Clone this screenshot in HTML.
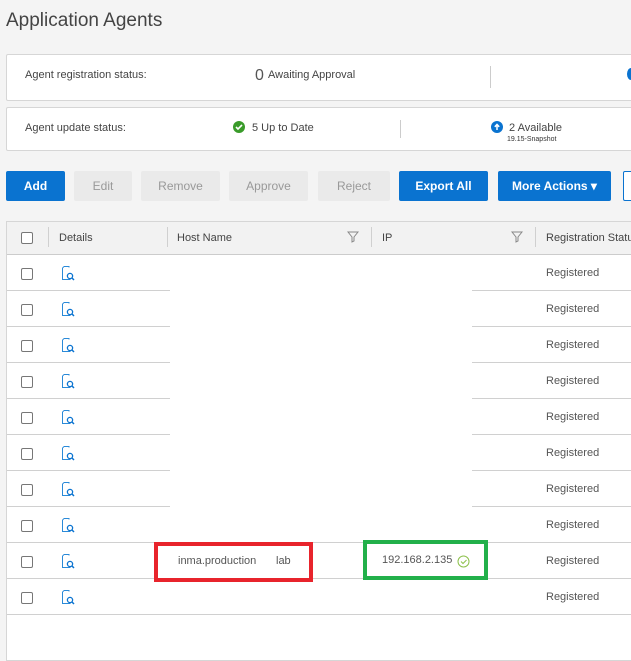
<!DOCTYPE html>
<html><head><meta charset="utf-8"><style>
*{margin:0;padding:0;box-sizing:border-box}
body{width:631px;height:647px;overflow:hidden;background:#f4f4f4;font-family:"Liberation Sans",sans-serif;color:#444;position:relative}
.a{position:absolute;white-space:nowrap}
.card{position:absolute;left:6px;width:640px;background:#fff;border:1px solid #d6d6d6;border-radius:2px}
.btn{position:absolute;top:171px;height:30px;font-size:12px;line-height:30px;text-align:center;border-radius:2px}
.p{background:#0a73d0;color:#fff;font-weight:bold}
.d{background:#eaeaea;color:#999}
.hl{position:absolute;height:1px;background:#d0d0d0}
.cb{position:absolute;left:21px;width:12px;height:12px;border:1px solid #777;border-radius:2px;background:#fff}
.reg{position:absolute;left:546px;font-size:11px;color:#555}
.vd{position:absolute;top:227px;width:1px;height:20px;background:#d0d0d0}
</style></head><body>
<div class="a" style="left:6px;top:10px;font-size:19px;color:#444">Application Agents</div>

<div class="card" style="top:54px;height:47px"></div>
<div class="a" style="left:25px;top:69px;font-size:11px">Agent registration status:</div>
<div class="a" style="left:255px;top:67px;font-size:16px;color:#555">0</div>
<div class="a" style="left:268px;top:69px;font-size:11px">Awaiting Approval</div>
<div style="position:absolute;left:490px;top:66px;width:1px;height:22px;background:#ccc"></div>
<div style="position:absolute;left:627px;top:68px;width:8px;height:12px;border-radius:50%;background:#0a73d0"></div>

<div class="card" style="top:107px;height:44px"></div>
<div class="a" style="left:25px;top:122px;font-size:11px">Agent update status:</div>
<div style="position:absolute;left:233px;top:121px;width:12px;height:12px;border-radius:50%;background:#3a9b2a"></div>
<svg class="a" style="left:235px;top:123px" width="8" height="8"><path d="M1 4l2 2 4-4" stroke="#fff" stroke-width="1.6" fill="none"/></svg>
<div class="a" style="left:252px;top:122px;font-size:11px">5 Up to Date</div>
<div style="position:absolute;left:400px;top:120px;width:1px;height:18px;background:#ccc"></div>
<div style="position:absolute;left:491px;top:121px;width:12px;height:12px;border-radius:50%;background:#0a73d0"></div>
<svg class="a" style="left:491px;top:121px" width="12" height="12"><path d="M6 9V3.5M3.8 5.8L6 3.5l2.2 2.3" stroke="#fff" stroke-width="1.5" fill="none"/></svg>
<div class="a" style="left:509px;top:122px;font-size:11px">2 Available</div>
<div class="a" style="left:507px;top:136px;font-size:7px;color:#333">19.15-Snapshot</div>

<div class="btn p" style="left:6px;width:59px">Add</div>
<div class="btn d" style="left:74px;width:58px">Edit</div>
<div class="btn d" style="left:141px;width:79px">Remove</div>
<div class="btn d" style="left:229px;width:79px">Approve</div>
<div class="btn d" style="left:318px;width:72px">Reject</div>
<div class="btn p" style="left:399px;width:89px">Export All</div>
<div class="btn p" style="left:498px;width:113px">More Actions ▾</div>
<div class="btn" style="left:623px;width:20px;border:1px solid #0a73d0;background:#fff"></div>

<div style="position:absolute;left:6px;top:221px;width:640px;height:440px;background:#fff;border:1px solid #d6d6d6"></div>
<div style="position:absolute;left:7px;top:222px;width:640px;height:33px;background:#f2f2f2;border-bottom:1px solid #ccc"></div>
<div class="cb" style="top:232px"></div>
<div class="vd" style="left:48px"></div><div class="vd" style="left:167px"></div><div class="vd" style="left:371px"></div><div class="vd" style="left:535px"></div>
<div class="a" style="left:59px;top:232px;font-size:11px">Details</div>
<div class="a" style="left:177px;top:232px;font-size:11px">Host Name</div>
<div class="a" style="left:382px;top:232px;font-size:11px">IP</div>
<div class="a" style="left:546px;top:232px;font-size:11px">Registration Status</div>
<svg class="a" style="left:347px;top:231px" width="12" height="12"><path d="M1 1h10L7 6v4l-2 1V6z" stroke="#888" fill="none"/></svg>
<svg class="a" style="left:511px;top:231px" width="12" height="12"><path d="M1 1h10L7 6v4l-2 1V6z" stroke="#888" fill="none"/></svg>

<div id="rows"></div>
<script>
var h='';
for(var i=0;i<10;i++){var y=255+i*36;
h+='<div class="cb" style="top:'+(y+13)+'px"></div>';
h+='<svg class="a" style="left:60px;top:'+(y+10)+'px" width="16" height="16"><path d="M4 1.5h5v1M2.5 3v11.5h8" stroke="#2a8ad8" fill="none"/><path d="M2.5 3l1.5-1.5" stroke="#2a8ad8"/><circle cx="10" cy="11" r="2.6" stroke="#0a73d0" stroke-width="1.3" fill="none"/><path d="M12 13l2 2" stroke="#0a73d0" stroke-width="1.5"/></svg>';
h+='<div class="reg" style="top:'+(y+12)+'px">Registered</div>';
var ly=y+35;
if(i<7){h+='<div class="hl" style="left:7px;width:163px;top:'+ly+'px"></div><div class="hl" style="left:472px;width:170px;top:'+ly+'px"></div>';}
else h+='<div class="hl" style="left:7px;width:640px;top:'+ly+'px"></div>';}
document.getElementById('rows').innerHTML=h;
</script>
<div class="a" style="left:178px;top:555px;font-size:11px;color:#555">inma.production</div>
<div class="a" style="left:276px;top:555px;font-size:11px;color:#555">lab</div>
<div style="position:absolute;left:154px;top:542px;width:159px;height:40px;border:4px solid #e8242c"></div>
<div class="a" style="left:382px;top:554px;font-size:11px;color:#555">192.168.2.135</div>
<svg class="a" style="left:457px;top:555px" width="13" height="13"><circle cx="6.5" cy="6.5" r="5.5" stroke="#8cc04a" fill="none"/><path d="M4 6.5l2 2 3.5-3.5" stroke="#8cc04a" fill="none"/></svg>
<div style="position:absolute;left:363px;top:540px;width:125px;height:40px;border:4px solid #22b04a"></div>
</body></html>
